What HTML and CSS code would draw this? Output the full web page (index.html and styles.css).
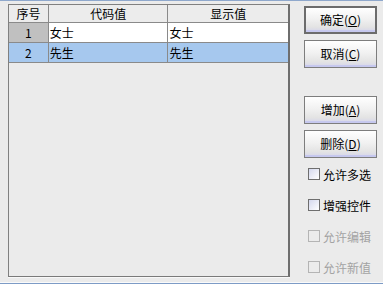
FILE: index.html
```html
<!DOCTYPE html>
<html>
<head>
<meta charset="utf-8">
<link rel="stylesheet" href="styles.css">
</head>
<body>
<div class="window">
  <div class="app">
    <div class="grid">
      <div class="row head">
        <div class="c c1">序号</div>
        <div class="c c2 center">代码值</div>
        <div class="c c3 center">显示值</div>
      </div>
      <div class="row">
        <div class="c c1 num">1</div>
        <div class="c c2 val">女士</div>
        <div class="c c3 val">女士</div>
      </div>
      <div class="row sel">
        <div class="c c1 num">2</div>
        <div class="c c2 val">先生</div>
        <div class="c c3 val">先生</div>
      </div>
    </div>
    <div class="side">
      <div class="btn default">确定(<u>O</u>)</div>
      <div class="btn b2">取消(<u>C</u>)</div>
      <div class="btn b3">增加(<u>A</u>)</div>
      <div class="btn b2">删除(<u>D</u>)</div>
      <label class="chk first"><span class="box"></span>允许多选</label>
      <label class="chk"><span class="box"></span>增强控件</label>
      <label class="chk off"><span class="box"></span>允许编辑</label>
      <label class="chk off"><span class="box"></span>允许新值</label>
    </div>
  </div>
</div>
</body>
</html>
```
FILE: styles.css
```css
html, body {
  margin: 0;
  padding: 0;
}
body {
  width: 383px;
  height: 284px;
  overflow: hidden;
  background: #ebebeb;
  font-family: "Noto Sans CJK SC", "Noto Sans", sans-serif;
  font-size: 12px;
  color: #000;
}
.window {
  border-top: 1px solid #8fa8cc;
  border-bottom: 1px solid #7d9bc6;
  box-sizing: border-box;
  height: 284px;
  box-shadow: inset 0 -1px 0 #fafafa;
}
.app {
  display: flex;
  padding: 3px 0 0 8px;
}
.grid {
  width: 282px;
  height: 273px;
  box-sizing: border-box;
  border-left: 1px solid #808080;
  border-top: 1px solid #808080;
  border-right: 2px solid #6e6e6e;
  border-bottom: 1px solid #7a7a7a;
  box-shadow: 0 1px 0 #f8f8f8;
  background: #ebebeb;
}
.row {
  display: flex;
  height: 19px;
  border-bottom: 1px solid #8a8a8a;
  line-height: 19px;
}
.row.head {
  height: 17px;
  line-height: 17px;
  background: #ececec;
}
.c {
  box-sizing: border-box;
  white-space: nowrap;
  overflow: hidden;
}
.c1 {
  width: 40px;
  border-right: 1px solid #8a8a8a;
  text-align: center;
}
.c2 {
  width: 120px;
  border-right: 1px solid #8a8a8a;
}
.c3 {
  width: 120px;
}
.center {
  text-align: center;
}
.val {
  background: #fff;
  padding-left: 1px;
}
.num {
  background: #c0c0c0;
}
.sel .c {
  background: #a6c8ee;
}
.side {
  display: flex;
  flex-direction: column;
  padding-left: 14px;
  padding-top: 2px;
}
.btn {
  width: 73px;
  height: 28px;
  box-sizing: border-box;
  border: 1px solid #7d7d7d;
  background: linear-gradient(#ffffff, #f1f1f1 45%, #e3e3e3 80%, #d4d4ec);
  box-shadow: inset 0 -2px 0 #c6c8ee;
  text-align: center;
  line-height: 25px;
}
.btn u {
  text-underline-offset: 1px;
}
.btn.default {
  border: 2px solid #6c6c6c;
  line-height: 23px;
}
.b2 {
  margin-top: 6px;
}
.b3 {
  margin-top: 28px;
}
.chk {
  display: flex;
  align-items: center;
  height: 16px;
  margin-top: 15px;
  padding-left: 4px;
}
.chk.first {
  margin-top: 8px;
}
.chk .box {
  width: 12px;
  height: 12px;
  box-sizing: border-box;
  border: 1px solid #6e6e6e;
  background: linear-gradient(135deg, #d4d8ee, #ffffff);
  margin-right: 3px;
}
.chk.off {
  color: #a3a3a3;
}
.chk.off .box {
  border-color: #b4b4b4;
  background: #ebebeb;
}
```
